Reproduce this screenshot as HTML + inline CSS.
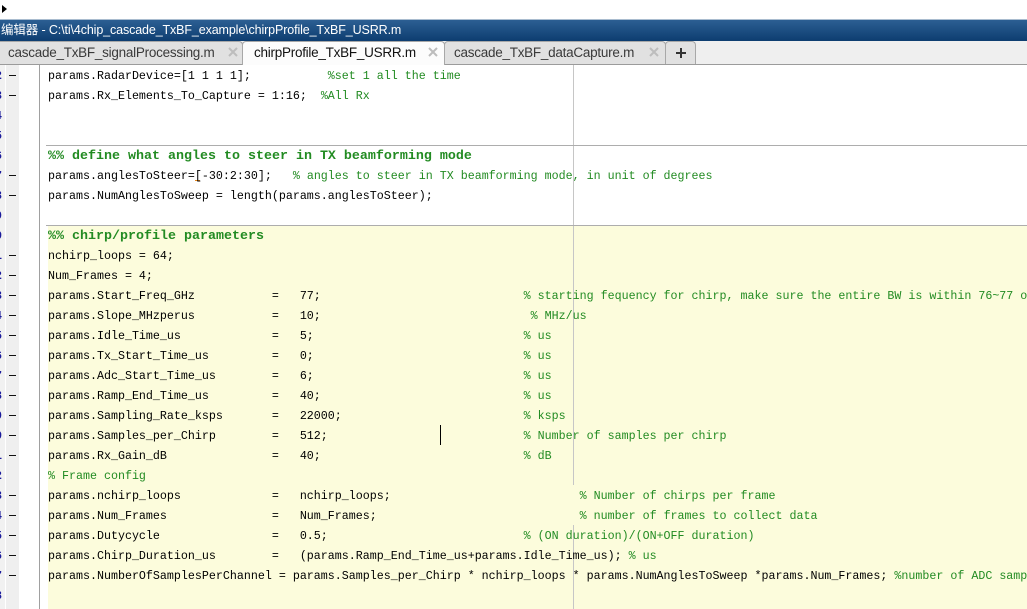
<!DOCTYPE html>
<html><head><meta charset="utf-8"><style>
html,body{margin:0;padding:0;background:#fff}
#p{position:relative;width:1027px;height:609px;overflow:hidden;background:#fff}
#p div,#p span,#p b{position:absolute}
.tb{left:0;top:19px;width:1027px;height:22px;background:linear-gradient(#2c5f93,#0d3d70);border-top:1px solid #a9bccf;box-sizing:border-box}
.tt{left:1px;top:20px;height:21px;color:#fff;font:12.5px/21px "Liberation Sans","Noto Sans CJK SC",sans-serif;letter-spacing:-.12px;white-space:pre}
.bar{left:0;top:41px;width:1027px;height:24px;background:#efefef;border-bottom:1px solid #9b9b9b;box-sizing:border-box}
.tab{top:41px;height:23px;background:#e1e1e1;border:1px solid #a8a8a8;border-bottom:0;border-radius:4px 4px 0 0;box-sizing:border-box}
.lab{top:43px;font:13.5px/20px "Liberation Sans",sans-serif;letter-spacing:-.26px;color:#3a3a3a;white-space:pre}
.x{top:46px;width:12px;height:12px}
.g1{left:0;top:65px;width:5px;height:544px;background:#f1f1f1}
.g2{left:6px;top:65px;width:13px;height:544px;background:#efefef}
.sep{left:39px;top:65px;width:1px;height:544px;background:#a0a0a0}
.hl{left:48px;top:226px;width:979px;height:383px;background:#fcfcdc}
.vl{left:573px;width:1px;background:#c6c6c6}
.rule{left:46px;width:981px;height:1px;background:#adadad}
.n{left:-5px;width:7px;height:20px;margin-top:1px;overflow:hidden;font:bold 11.67px/20px "Liberation Mono",monospace;color:#1c1c9c;white-space:pre}
.d{left:9px;width:7px;height:1px;background:#111}
.l{left:48px;height:20px;margin-top:1px;font:11.667px/20px "Liberation Mono",monospace;color:#000;white-space:pre}
.l.c,.c{color:#228b22}
.l.h{font-weight:bold;font-size:13.333px;color:#228b22;margin-top:2px}
</style></head><body><div id="p">
<svg style="position:absolute;left:2px;top:5px" width="5" height="8"><path d="M0 0L5 4L0 8Z" fill="#000"/></svg>
<div class="tb"></div>
<div class="tt">编辑器 - C:\ti\4chip_cascade_TxBF_example\chirpProfile_TxBF_USRR.m</div>
<div class="bar"></div>
<div class="tab" style="left:-4px;width:247px"></div>
<div class="tab" style="left:444px;width:222px"></div>
<div class="tab" style="left:665px;width:31px"></div>
<div class="tab" style="left:242px;width:203px;height:24px;background:#fcfcfc"></div>
<div class="lab" style="left:8px">cascade_TxBF_signalProcessing.m</div>
<div class="lab" style="left:254px;color:#111">chirpProfile_TxBF_USRR.m</div>
<div class="lab" style="left:454px">cascade_TxBF_dataCapture.m</div>
<svg class="x" style="position:absolute;left:227px" viewBox="0 0 12 12"><path d="M2 2L10 10M10 2L2 10" stroke="#bdbdbd" stroke-width="2"/></svg>
<svg class="x" style="position:absolute;left:427px" viewBox="0 0 12 12"><path d="M2 2L10 10M10 2L2 10" stroke="#bdbdbd" stroke-width="2"/></svg>
<svg class="x" style="position:absolute;left:648px" viewBox="0 0 12 12"><path d="M2 2L10 10M10 2L2 10" stroke="#bdbdbd" stroke-width="2"/></svg>
<svg style="position:absolute;left:675px;top:47px" width="12" height="12"><path d="M6 1V11M1 6H11" stroke="#333" stroke-width="2"/></svg>

<div class="g1"></div><div class="g2"></div><div class="sep"></div>
<div class="hl"></div>
<div class="vl" style="top:65px;height:420px"></div>
<div class="vl" style="top:525px;height:84px"></div>
<div class="rule" style="top:145px"></div>
<div class="rule" style="top:225px"></div>
<div style="left:440px;top:425px;width:1px;height:20px;background:#000"></div>
<div style="left:195px;top:180px;width:5px;height:1px;background:#e8871a"></div>

<div class="n" style="top:65px">2</div><div class="n" style="top:85px">3</div><div class="n" style="top:105px">4</div><div class="n" style="top:125px">5</div><div class="n" style="top:145px">6</div><div class="n" style="top:165px">7</div><div class="n" style="top:185px">8</div><div class="n" style="top:205px">9</div><div class="n" style="top:225px">0</div><div class="n" style="top:245px">1</div><div class="n" style="top:265px">2</div><div class="n" style="top:285px">3</div><div class="n" style="top:305px">4</div><div class="n" style="top:325px">5</div><div class="n" style="top:345px">6</div><div class="n" style="top:365px">7</div><div class="n" style="top:385px">8</div><div class="n" style="top:405px">9</div><div class="n" style="top:425px">0</div><div class="n" style="top:445px">1</div><div class="n" style="top:465px">2</div><div class="n" style="top:485px">3</div><div class="n" style="top:505px">4</div><div class="n" style="top:525px">5</div><div class="n" style="top:545px">6</div><div class="n" style="top:565px">7</div><div class="n" style="top:585px">8</div>

<div class="d" style="top:75px"></div><div class="d" style="top:95px"></div><div class="d" style="top:175px"></div><div class="d" style="top:195px"></div><div class="d" style="top:255px"></div><div class="d" style="top:275px"></div><div class="d" style="top:295px"></div><div class="d" style="top:315px"></div><div class="d" style="top:335px"></div><div class="d" style="top:355px"></div><div class="d" style="top:375px"></div><div class="d" style="top:395px"></div><div class="d" style="top:415px"></div><div class="d" style="top:435px"></div><div class="d" style="top:455px"></div><div class="d" style="top:495px"></div><div class="d" style="top:515px"></div><div class="d" style="top:535px"></div><div class="d" style="top:555px"></div><div class="d" style="top:575px"></div>

<div class="l" style="top:65px">params.RadarDevice=[1 1 1 1];           <span class="c" style="position:static">%set 1 all the time</span></div>
<div class="l" style="top:85px">params.Rx_Elements_To_Capture = 1:16;  <span class="c" style="position:static">%All Rx</span></div>
<div class="l h" style="top:145px">%% define what angles to steer in TX beamforming mode</div>
<div class="l" style="top:165px">params.anglesToSteer=[-30:2:30];   <span class="c" style="position:static">% angles to steer in TX beamforming mode, in unit of degrees</span></div>
<div class="l" style="top:185px">params.NumAnglesToSweep = length(params.anglesToSteer);</div>
<div class="l h" style="top:225px">%% chirp/profile parameters</div>
<div class="l" style="top:245px">nchirp_loops = 64;</div>
<div class="l" style="top:265px">Num_Frames = 4;</div>
<div class="l" style="top:285px">params.Start_Freq_GHz           =   77;                             <span class="c" style="position:static">% starting fequency for chirp, make sure the entire BW is within 76~77 or 77~81</span></div>
<div class="l" style="top:305px">params.Slope_MHzperus           =   10;                              <span class="c" style="position:static">% MHz/us</span></div>
<div class="l" style="top:325px">params.Idle_Time_us             =   5;                              <span class="c" style="position:static">% us</span></div>
<div class="l" style="top:345px">params.Tx_Start_Time_us         =   0;                              <span class="c" style="position:static">% us</span></div>
<div class="l" style="top:365px">params.Adc_Start_Time_us        =   6;                              <span class="c" style="position:static">% us</span></div>
<div class="l" style="top:385px">params.Ramp_End_Time_us         =   40;                             <span class="c" style="position:static">% us</span></div>
<div class="l" style="top:405px">params.Sampling_Rate_ksps       =   22000;                          <span class="c" style="position:static">% ksps</span></div>
<div class="l" style="top:425px">params.Samples_per_Chirp        =   512;                            <span class="c" style="position:static">% Number of samples per chirp</span></div>
<div class="l" style="top:445px">params.Rx_Gain_dB               =   40;                             <span class="c" style="position:static">% dB</span></div>
<div class="l c" style="top:465px">% Frame config</div>
<div class="l" style="top:485px">params.nchirp_loops             =   nchirp_loops;                           <span class="c" style="position:static">% Number of chirps per frame</span></div>
<div class="l" style="top:505px">params.Num_Frames               =   Num_Frames;                             <span class="c" style="position:static">% number of frames to collect data</span></div>
<div class="l" style="top:525px">params.Dutycycle                =   0.5;                            <span class="c" style="position:static">% (ON duration)/(ON+OFF duration)</span></div>
<div class="l" style="top:545px">params.Chirp_Duration_us        =   (params.Ramp_End_Time_us+params.Idle_Time_us); <span class="c" style="position:static">% us</span></div>
<div class="l" style="top:565px">params.NumberOfSamplesPerChannel = params.Samples_per_Chirp * nchirp_loops * params.NumAnglesToSweep *params.Num_Frames; <span class="c" style="position:static">%number of ADC samples per all</span></div>
</div></body></html>
